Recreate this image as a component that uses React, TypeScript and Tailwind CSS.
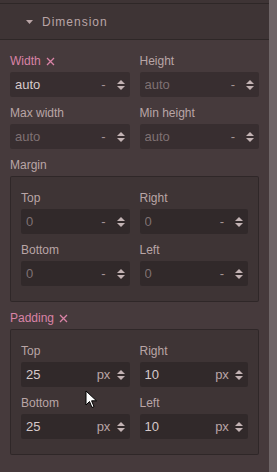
import React from 'react';

type Field = { label: string; value?: string; placeholder?: string; unit: string; active?: boolean };

const Arrows = () => (
  <svg width="8" height="12" viewBox="0 0 8 12" className="shrink-0">
    <polygon points="0,5 4,1 8,5" fill="#c3b3b4" />
    <polygon points="0,7 8,7 4,11" fill="#c3b3b4" />
  </svg>
);

const Cross = () => (
  <svg width="9" height="9" viewBox="0 0 9 9" className="ml-[5px]">
    <path d="M1 1 L8 8 M8 1 L1 8" stroke="#d983a6" strokeWidth="1.3" />
  </svg>
);

const Input = ({ value, placeholder, unit }: { value?: string; placeholder?: string; unit: string }) => (
  <div className="flex h-[25px] items-center rounded-[2px] bg-[rgba(0,0,0,0.2)] pl-[5px] pr-[5px] text-[13px]">
    <span className={`flex-1 truncate ${value ? 'text-[#d6cacb]' : 'text-[#7f7173]'}`}>{value ?? placeholder}</span>
    <span className={`w-[20px] text-center ${unit === 'px' ? 'text-[#b9a5a6]' : 'text-[#a59496]'}`}>{unit}</span>
    <span className="ml-[3px] flex items-center">
      <Arrows />
    </span>
  </div>
);

const Prop = ({ f }: { f: Field }) => (
  <div>
    <div className={`mb-[3px] flex h-[15px] items-center text-[12px] leading-[15px] ${f.active ? 'text-[#d983a6]' : 'text-[#b9a5a6]'}`}>
      {f.label}
      {f.active && <Cross />}
    </div>
    <Input value={f.value} placeholder={f.placeholder} unit={f.unit} />
  </div>
);

const Composite = ({ label, active, fields }: { label: string; active?: boolean; fields: Field[] }) => (
  <div className="col-span-2">
    <div className={`mb-[3px] flex h-[15px] items-center text-[12px] leading-[15px] ${active ? 'text-[#d983a6]' : 'text-[#b9a5a6]'}`}>
      {label}
      {active && <Cross />}
    </div>
    <div className="grid grid-cols-2 gap-x-[10px] gap-y-[9px] rounded-[2px] border border-[rgba(0,0,0,0.25)] bg-[rgba(0,0,0,0.1)] px-[10px] pb-[15px] pt-[14px]">
      {fields.map((f) => (
        <Prop key={f.label} f={f} />
      ))}
    </div>
  </div>
);

export default function App() {
  const top: Field[] = [
    { label: 'Width', value: 'auto', unit: '-', active: true },
    { label: 'Height', placeholder: 'auto', unit: '-' },
    { label: 'Max width', placeholder: 'auto', unit: '-' },
    { label: 'Min height', placeholder: 'auto', unit: '-' },
  ];
  const margin: Field[] = [
    { label: 'Top', placeholder: '0', unit: '-' },
    { label: 'Right', placeholder: '0', unit: '-' },
    { label: 'Bottom', placeholder: '0', unit: '-' },
    { label: 'Left', placeholder: '0', unit: '-' },
  ];
  const padding: Field[] = [
    { label: 'Top', value: '25', unit: 'px' },
    { label: 'Right', value: '10', unit: 'px' },
    { label: 'Bottom', value: '25', unit: 'px' },
    { label: 'Left', value: '10', unit: 'px' },
  ];

  return (
    <div className="relative flex h-[472px] w-[277px] overflow-hidden bg-[#463a3c] font-['Liberation_Sans',Arial,sans-serif]">
      <div className="min-w-0 flex-1">
        <div className="h-[4px] border-b border-[rgba(0,0,0,0.25)] bg-[rgba(0,0,0,0.1)]" />
        <div className="flex h-[36px] items-center border-b border-[rgba(0,0,0,0.25)] bg-[rgba(0,0,0,0.1)] pl-[26px] text-[12px] tracking-[1px] text-[#b9a5a6]">
          <svg width="7" height="4" viewBox="0 0 7 4" className="mr-[9px]">
            <polygon points="0,0 7,0 3.5,4" fill="#b9a5a6" />
          </svg>
          Dimension
        </div>
        <div className="grid grid-cols-2 gap-x-[10px] gap-y-[9px] px-[10px] pt-[14px]">
          {top.map((f) => (
            <Prop key={f.label} f={f} />
          ))}
          <Composite label="Margin" fields={margin} />
          <Composite label="Padding" active fields={padding} />
        </div>
      </div>
      <div className="w-[8px] bg-[#6e6567]" />
      <svg width="13" height="19" viewBox="0 0 13 19" className="absolute left-[85px] top-[390px]">
        <path d="M1 1 L1 15 L4.5 11.5 L7 17.5 L9 16.6 L6.6 10.8 L11.5 10.8 Z" fill="#fff" stroke="#000" strokeWidth="1" strokeLinejoin="round" />
      </svg>
    </div>
  );
}
